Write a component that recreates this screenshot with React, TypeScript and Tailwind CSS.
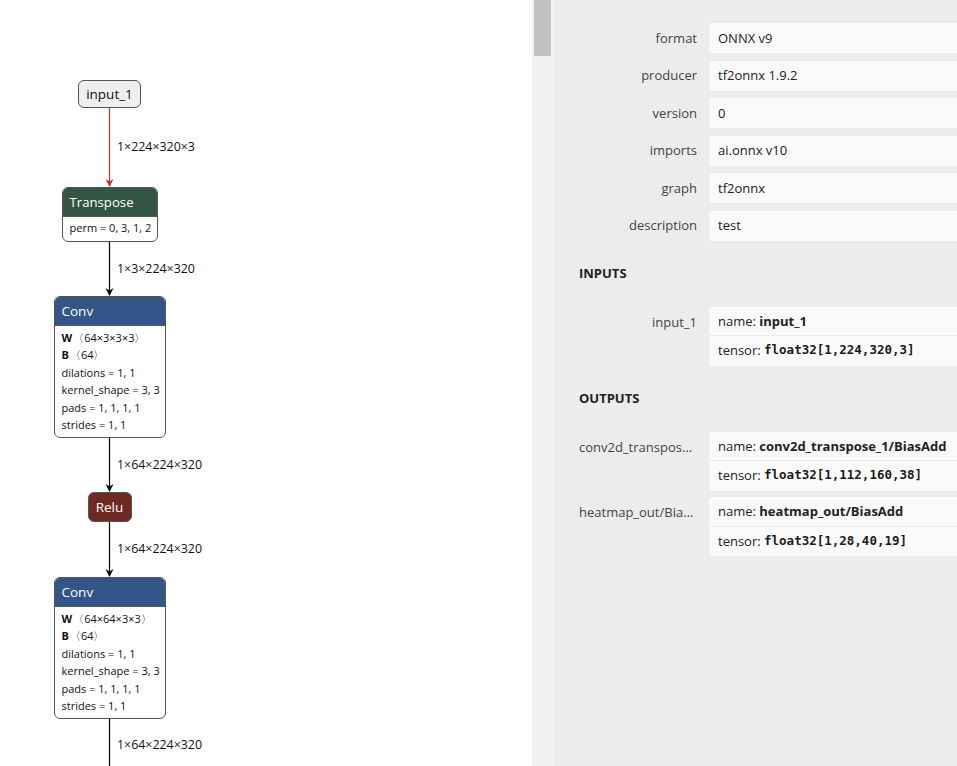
import React from "react";

const sans = "font-['Open_Sans',sans-serif]";
const mono = "font-['DejaVu_Sans_Mono',monospace]";

function Edge({ h, label, red = false, arrow = true }: { h: number; label: string; red?: boolean; arrow?: boolean }) {
  const color = red ? "#d12a2a" : "#000000";
  return (
    <div className="relative w-full flex justify-center shrink-0" style={{ height: h }}>
      <svg width="11" height={h} className="block">
        <line x1="5.5" y1="0" x2="5.5" y2={arrow ? h - 2 : h} stroke={color} strokeWidth="1.2" />
        {arrow && <path d={`M5.5 ${h} L1.5 ${h - 8} L5.5 ${h - 5.5} L9.5 ${h - 8} Z`} fill={color} />}
      </svg>
      <div className="absolute left-[117px] top-1/2 -translate-y-[45%] text-[12.4px] leading-none text-[#111] whitespace-nowrap">
        {label}
      </div>
    </div>
  );
}

function Attr({ children }: { children: React.ReactNode }) {
  return <div className="h-[17.4px] flex items-center text-[11px] text-[#111] whitespace-nowrap">{children}</div>;
}

function ConvNode({ w }: { w: string }) {
  return (
    <div className="w-[112px] h-[142px] shrink-0 rounded-[6px] border border-[#555] bg-white overflow-hidden flex flex-col">
      <div className="h-[29px] bg-[#335588] text-white text-[13.5px] flex items-center pl-[7px] pt-[1px] border-b border-[#555]">Conv</div>
      <div className="flex flex-col pl-[7px] pt-[4px]">
        <Attr>
          <b className="mr-[1px]">W</b>〈{w}〉
        </Attr>
        <Attr>
          <b className="mr-[1px]">B</b>〈64〉
        </Attr>
        <Attr>dilations = 1, 1</Attr>
        <Attr>kernel_shape = 3, 3</Attr>
        <Attr>pads = 1, 1, 1, 1</Attr>
        <Attr>strides = 1, 1</Attr>
      </div>
    </div>
  );
}

function Prop({ name, value }: { name: string; value: string }) {
  return (
    <div className="flex items-center gap-[12px] h-[30px]">
      <div className="w-[118px] shrink-0 text-right truncate text-[#444] pt-[1px]">{name}</div>
      <div className="flex-1 h-full bg-[#fafafa] rounded-[3px] flex items-center pl-[9px] pt-[1px] text-[#222]">{value}</div>
    </div>
  );
}

function Arg({ label, name, type }: { label: string; name: string; type: string }) {
  return (
    <div className="flex items-start gap-[12px]">
      <div className="w-[118px] shrink-0 text-right truncate text-[#444] leading-[29.5px] pt-[1px]">{label}</div>
      <div className="flex-1 bg-[#fafafa] rounded-[3px] flex flex-col">
        <div className="h-[29.5px] flex items-center pl-[9px] pt-[1px] border-b border-[#ececec] text-[#222]">
          name:&nbsp;<b className="font-bold">{name}</b>
        </div>
        <div className="h-[29.5px] flex items-center pl-[9px] text-[#222]">
          tensor:&nbsp;<span className={`${mono} font-bold text-[12.5px] text-[#1a1a1a]`}>{type}</span>
        </div>
      </div>
    </div>
  );
}

export default function App() {
  return (
    <div className={`flex w-[957px] h-[766px] overflow-hidden bg-white ${sans}`}>
      {/* Graph canvas */}
      <div className="w-[532px] h-full shrink-0 bg-white overflow-hidden">
        <div className="w-[219px] flex flex-col items-center pt-[79.5px]">
          <div className="w-[63px] h-[28px] shrink-0 rounded-[6px] border border-[#555] bg-[#eeeeee] flex items-center justify-center pt-[1px] text-[13.5px] text-[#111]">
            input_1
          </div>
          <Edge h={79} label="1×224×320×3" red />
          <div className="w-[96px] h-[55px] shrink-0 rounded-[6px] border border-[#555] bg-white overflow-hidden flex flex-col">
            <div className="h-[29px] bg-[#335544] text-white text-[13.2px] flex items-center pl-[7px] pt-[2px] border-b border-[#555]">
              Transpose
            </div>
            <div className="flex-1 flex items-center pl-[7px] text-[11px] text-[#111] whitespace-nowrap">perm = 0, 3, 1, 2</div>
          </div>
          <Edge h={54} label="1×3×224×320" />
          <ConvNode w="64×3×3×3" />
          <Edge h={54} label="1×64×224×320" />
          <div className="w-[44px] h-[30px] shrink-0 rounded-[6px] border border-[#555] bg-[#702921] flex items-center justify-center pt-[1px] text-[13.5px] text-white">
            Relu
          </div>
          <Edge h={55} label="1×64×224×320" />
          <ConvNode w="64×64×3×3" />
          <Edge h={53} label="1×64×224×320" arrow={false} />
        </div>
      </div>

      {/* Scrollbar */}
      <div className="w-[21px] h-full shrink-0 bg-[#f1f1f1]">
        <div className="ml-[2px] w-[17px] h-[56px] bg-[#c1c1c1]" />
      </div>

      {/* Properties panel */}
      <div className="w-[480px] h-full shrink-0 bg-[#ececec] pl-[26px] pt-[23px] text-[13px] flex flex-col">
        <div className="flex flex-col gap-[7.5px]">
          <Prop name="format" value="ONNX v9" />
          <Prop name="producer" value="tf2onnx 1.9.2" />
          <Prop name="version" value="0" />
          <Prop name="imports" value="ai.onnx v10" />
          <Prop name="graph" value="tf2onnx" />
          <Prop name="description" value="test" />
        </div>
        <div className="h-[66px] flex items-center font-bold text-[13px] text-[#222]">INPUTS</div>
        <Arg label="input_1" name="input_1" type="float32[1,224,320,3]" />
        <div className="h-[66px] flex items-center font-bold text-[13px] text-[#222]">OUTPUTS</div>
        <div className="flex flex-col gap-[6.5px]">
          <Arg label="conv2d_transpose_1/BiasAdd" name="conv2d_transpose_1/BiasAdd" type="float32[1,112,160,38]" />
          <Arg label="heatmap_out/BiasAdd" name="heatmap_out/BiasAdd" type="float32[1,28,40,19]" />
        </div>
      </div>
    </div>
  );
}
